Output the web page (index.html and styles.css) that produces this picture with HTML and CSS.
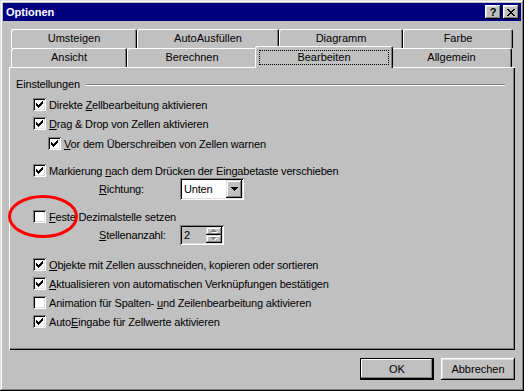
FILE: index.html
```html
<!DOCTYPE html>
<html>
<head>
    <title>Optionen</title>
    <link rel="stylesheet" href="styles.css">
</head>
<body>
<div class="window">
    <div class="titlebar">
        <span class="title">Optionen</span>
        <div class="caption-buttons">
            <div class="cap help">?</div>
            <div class="cap">
                <svg width="8" height="7" viewBox="0 0 8 7" shape-rendering="crispEdges"><path d="M0 0h2v1H0zM6 0h2v1H6zM1 1h2v1H1zM5 1h2v1H5zM2 2h4v1H2zM3 3h2v1H3zM2 4h4v1H2zM1 5h2v1H1zM5 5h2v1H5zM0 6h2v1H0zM6 6h2v1H6z" fill="#000"/></svg>
            </div>
        </div>
    </div>

    <div class="client">
        <div class="tabs">
            <div class="tabrow">
                <div class="tab w-umsteigen">Umsteigen</div>
                <div class="tab w-autoausfuellen">AutoAusfüllen</div>
                <div class="tab w-diagramm">Diagramm</div>
                <div class="tab w-farbe">Farbe</div>
            </div>
            <div class="tabrow">
                <div class="tab w-ansicht">Ansicht</div>
                <div class="tab w-berechnen">Berechnen</div>
                <div class="tab w-bearbeiten active"><span class="focus">Bearbeiten</span></div>
                <div class="tab w-allgemein">Allgemein</div>
            </div>
        </div>

        <div class="panel">
            <div class="legend"><span>Einstellungen</span><span class="line"></span></div>

            <div class="row ind1 mt4">
                <span class="cb on"><svg width="7" height="7" viewBox="0 0 7 7" shape-rendering="crispEdges"><path d="M0 2h1v3H0zM1 3h1v3H1zM2 4h1v3H2zM3 3h1v3H3zM4 2h1v3H4zM5 1h1v3H5zM6 0h1v3H6z"/></svg></span>
                <span>Direkte <u>Z</u>ellbearbeitung aktivieren</span>
            </div>
            <div class="row ind1">
                <span class="cb on"><svg width="7" height="7" viewBox="0 0 7 7" shape-rendering="crispEdges"><path d="M0 2h1v3H0zM1 3h1v3H1zM2 4h1v3H2zM3 3h1v3H3zM4 2h1v3H4zM5 1h1v3H5zM6 0h1v3H6z"/></svg></span>
                <span><u>D</u>rag &amp; Drop von Zellen aktivieren</span>
            </div>
            <div class="row ind2 mt1">
                <span class="cb on"><svg width="7" height="7" viewBox="0 0 7 7" shape-rendering="crispEdges"><path d="M0 2h1v3H0zM1 3h1v3H1zM2 4h1v3H2zM3 3h1v3H3zM4 2h1v3H4zM5 1h1v3H5zM6 0h1v3H6z"/></svg></span>
                <span><u>V</u>or dem Überschreiben von Zellen warnen</span>
            </div>

            <div class="row ind1 mt8">
                <span class="cb on"><svg width="7" height="7" viewBox="0 0 7 7" shape-rendering="crispEdges"><path d="M0 2h1v3H0zM1 3h1v3H1zM2 4h1v3H2zM3 3h1v3H3zM4 2h1v3H4zM5 1h1v3H5zM6 0h1v3H6z"/></svg></span>
                <span>Markierung <u>n</u>ach dem Drücken der Eingabetaste verschieben</span>
            </div>
            <div class="field combo-row">
                <span class="field-label"><u>R</u>ichtung:</span>
                <div class="combo">
                    <span class="value">Unten</span>
                    <span class="drop"><svg width="7" height="4" viewBox="0 0 7 4" shape-rendering="crispEdges"><path d="M0 0h7v1H0zM1 1h5v1H1zM2 2h3v1H2zM3 3h1v1H3z"/></svg></span>
                </div>
            </div>

            <div class="row ind1 mt7">
                <span class="cb"></span>
                <span><u>F</u>este Dezimalstelle setzen</span>
            </div>
            <div class="field spin-row">
                <span class="field-label"><u>S</u>tellenanzahl:</span>
                <div class="spin">
                    <span class="value">2</span>
                    <span class="arrows">
                        <span class="arr"><svg width="6" height="4" viewBox="0 0 6 4" shape-rendering="crispEdges"><path d="M3 1h1v1H3zM2 2h3v1H2zM1 3h5v1H1z" fill="#fff"/><path d="M2 0h1v1H2zM1 1h3v1H1zM0 2h5v1H0z" fill="#808080"/></svg></span>
                        <span class="arr"><svg width="6" height="4" viewBox="0 0 6 4" shape-rendering="crispEdges"><path d="M1 1h5v1H1zM2 2h3v1H2zM3 3h1v1H3z" fill="#fff"/><path d="M0 0h5v1H0zM1 1h3v1H1zM2 2h1v1H2z" fill="#808080"/></svg></span>
                    </span>
                </div>
            </div>

            <div class="row ind1 mt10">
                <span class="cb on"><svg width="7" height="7" viewBox="0 0 7 7" shape-rendering="crispEdges"><path d="M0 2h1v3H0zM1 3h1v3H1zM2 4h1v3H2zM3 3h1v3H3zM4 2h1v3H4zM5 1h1v3H5zM6 0h1v3H6z"/></svg></span>
                <span><u>O</u>bjekte mit Zellen ausschneiden, kopieren oder sortieren</span>
            </div>
            <div class="row ind1">
                <span class="cb on"><svg width="7" height="7" viewBox="0 0 7 7" shape-rendering="crispEdges"><path d="M0 2h1v3H0zM1 3h1v3H1zM2 4h1v3H2zM3 3h1v3H3zM4 2h1v3H4zM5 1h1v3H5zM6 0h1v3H6z"/></svg></span>
                <span><u>A</u>ktualisieren von automatischen Verknüpfungen bestätigen</span>
            </div>
            <div class="row ind1">
                <span class="cb"></span>
                <span>Animation für Spalten- <u>u</u>nd Zeilenbearbeitung aktivieren</span>
            </div>
            <div class="row ind1">
                <span class="cb on"><svg width="7" height="7" viewBox="0 0 7 7" shape-rendering="crispEdges"><path d="M0 2h1v3H0zM1 3h1v3H1zM2 4h1v3H2zM3 3h1v3H3zM4 2h1v3H4zM5 1h1v3H5zM6 0h1v3H6z"/></svg></span>
                <span>Auto<u>E</u>ingabe für Zellwerte aktivieren</span>
            </div>
        </div>

        <div class="actions">
            <div class="btn default">OK</div>
            <div class="btn">Abbrechen</div>
        </div>
    </div>

    <!-- red marker drawn over the screenshot -->
    <svg class="marker" width="524" height="391" viewBox="0 0 524 391">
        <ellipse cx="43" cy="216.5" rx="33.5" ry="20" fill="none" stroke="#f00" stroke-width="3"/>
    </svg>
</div>
</body>
</html>
```

FILE: styles.css
```css
* {
    box-sizing: border-box;
}

body {
    margin: 0;
    font-family: "Liberation Sans", Arial, sans-serif;
    font-size: 11px;
    color: #000;
    background: #c0c0c0;
}

.window {
    position: relative;
    width: 524px;
    height: 391px;
    padding: 3px;
    background: #c0c0c0;
    box-shadow: inset -1px -1px #000, inset 1px 1px #dfdfdf, inset -2px -2px #808080, inset 2px 2px #fff;
}

/* title bar */
.titlebar {
    height: 18px;
    background: #000080;
    color: #fff;
    display: flex;
    align-items: center;
    justify-content: space-between;
    padding: 0 2px 0 3px;
}

.title {
    font-weight: bold;
}

.caption-buttons {
    display: flex;
    gap: 2px;
}

.cap {
    width: 16px;
    height: 14px;
    background: #c0c0c0;
    color: #000;
    display: flex;
    align-items: center;
    justify-content: center;
    box-shadow: inset -1px -1px #000, inset 1px 1px #fff, inset -2px -2px #808080, inset 2px 2px #dfdfdf;
}

.cap.help {
    font-weight: bold;
    font-size: 11px;
    line-height: 14px;
}

/* tabs */
.client {
    padding: 0 6px;
}

.tabs {
    margin-top: 8px;
    padding-left: 2px;
}

.tabrow {
    display: flex;
    height: 19px;
}

.tab {
    height: 19px;
    padding-top: 3px;
    line-height: 13px;
    text-align: center;
    background: #c0c0c0;
    border-radius: 2px 2px 0 0;
    box-shadow: inset 1px 1px #fff, inset -1px 0 #000, inset -2px 0 #808080;
}

.w-umsteigen { width: 126px; }
.w-autoausfuellen { width: 142px; }
.w-diagramm { width: 124px; }
.w-farbe { width: 110px; }
.w-ansicht { width: 116px; }
.w-berechnen { width: 130px; }
.w-bearbeiten { width: 134px; }
.w-allgemein { width: 121px; }

.tab.active {
    position: relative;
    z-index: 1;
    width: 138px;
    height: 22px;
    margin: -2px -2px 0;
    padding: 4px 4px 0 4px;
}

.focus {
    display: block;
    height: 15px;
    line-height: 13px;
    border: 1px dotted #000;
}

/* page */
.panel {
    height: 283px;
    padding: 11px 8px 0 7px;
    letter-spacing: -0.17px;
    box-shadow: inset 1px 1px #fff, inset -1px -1px #000, inset -2px -2px #808080;
}

.legend {
    display: flex;
    align-items: center;
    height: 13px;
    line-height: 13px;
}

.legend .line {
    flex: 1;
    height: 2px;
    margin: 1px 2px 0 6px;
    border-top: 1px solid #808080;
    border-bottom: 1px solid #fff;
}

.row {
    display: flex;
    align-items: center;
    height: 19px;
    white-space: nowrap;
}

.ind1 { padding-left: 17px; }
.ind2 { padding-left: 32px; }
.mt1 { margin-top: 1px; }
.mt4 { margin-top: 4px; }
.mt7 { margin-top: 7px; }
.mt8 { margin-top: 8px; }
.mt10 { margin-top: 10px; }

.cb {
    flex: none;
    width: 13px;
    height: 13px;
    margin-right: 3px;
    padding: 3px;
    background: #fff;
    box-shadow: inset 1px 1px #808080, inset -1px -1px #fff, inset 2px 2px #000, inset -2px -2px #dfdfdf;
}

.cb svg {
    display: block;
}

.field {
    display: flex;
    align-items: center;
    padding-left: 83px;
}

.field-label {
    width: 81px;
}

.combo-row {
    height: 22px;
    margin-top: -2px;
}

.spin-row {
    height: 20px;
    margin-top: -1px;
}

.combo {
    width: 64px;
    height: 22px;
    padding: 2px;
    display: flex;
    background: #fff;
    box-shadow: inset 1px 1px #808080, inset -1px -1px #fff, inset 2px 2px #000, inset -2px -2px #dfdfdf;
}

.combo .value,
.spin .value {
    flex: 1;
    padding-left: 2px;
    line-height: 18px;
}

.combo .drop {
    width: 16px;
    height: 18px;
    display: flex;
    align-items: center;
    justify-content: center;
    background: #c0c0c0;
    box-shadow: inset -1px -1px #000, inset 1px 1px #dfdfdf, inset -2px -2px #808080, inset 2px 2px #fff;
}

.spin {
    width: 44px;
    height: 20px;
    padding: 2px;
    display: flex;
    background: #c0c0c0;
    box-shadow: inset 1px 1px #808080, inset -1px -1px #fff, inset 2px 2px #000, inset -2px -2px #dfdfdf;
}

.spin .value {
    line-height: 16px;
}

.spin .arrows {
    width: 16px;
    display: flex;
    flex-direction: column;
}

.arr {
    flex: 1;
    display: flex;
    align-items: center;
    justify-content: center;
    background: #c0c0c0;
    box-shadow: inset -1px -1px #000, inset 1px 1px #dfdfdf, inset -2px -2px #808080, inset 2px 2px #fff;
}

/* dialog buttons */
.actions {
    display: flex;
    justify-content: flex-end;
    gap: 7px;
    margin-top: 8px;
}

.btn {
    width: 74px;
    height: 22px;
    line-height: 22px;
    text-align: center;
    background: #c0c0c0;
    box-shadow: inset -1px -1px #000, inset 1px 1px #fff, inset -2px -2px #808080, inset 2px 2px #dfdfdf;
}

.btn.default {
    box-shadow: inset 0 0 0 1px #000, inset -2px -2px #000, inset -3px -3px #808080, inset 2px 2px #fff;
}

.marker {
    position: absolute;
    left: 0;
    top: 0;
    pointer-events: none;
}
```
